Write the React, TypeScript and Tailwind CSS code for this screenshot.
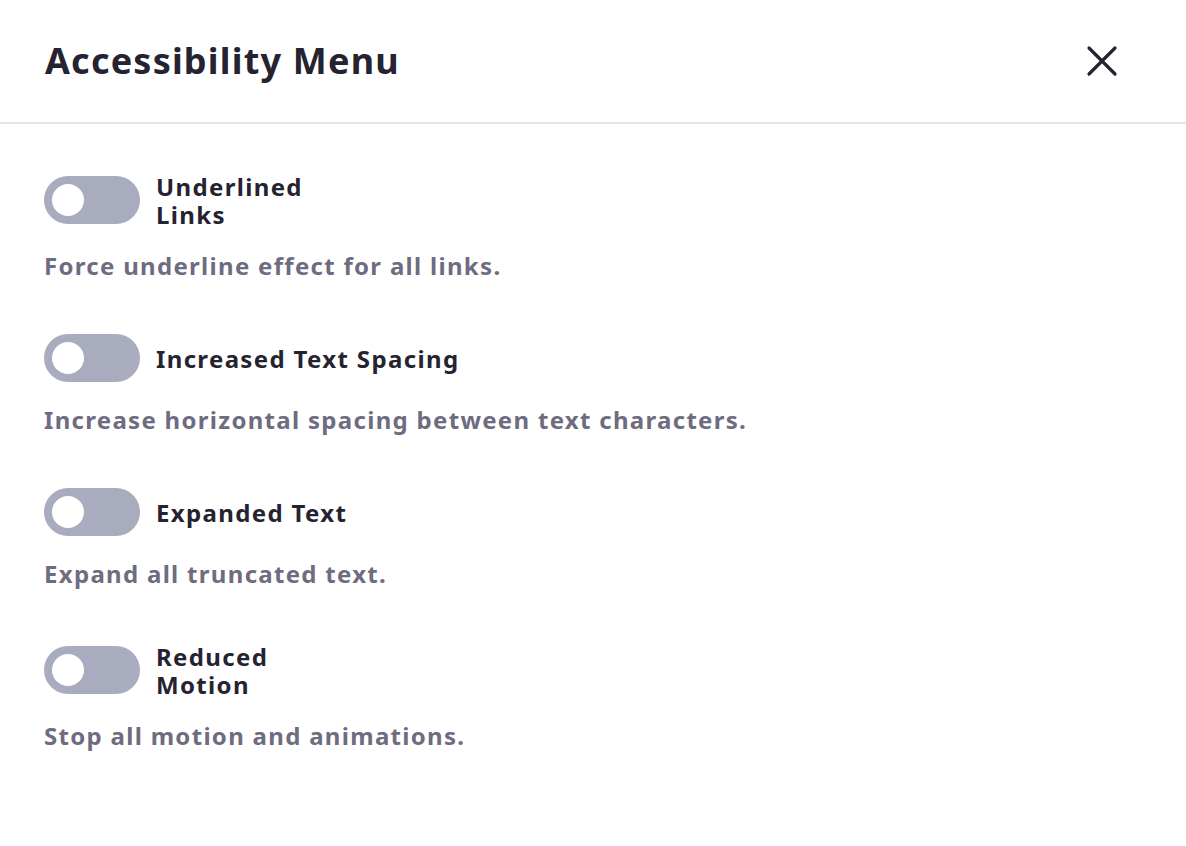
import React from "react";

const items = [
  { label: "Underlined Links", narrow: true, desc: "Force underline effect for all links." },
  { label: "Increased Text Spacing", narrow: false, desc: "Increase horizontal spacing between text characters." },
  { label: "Expanded Text", narrow: false, desc: "Expand all truncated text." },
  { label: "Reduced Motion", narrow: true, desc: "Stop all motion and animations." },
];

function Toggle() {
  return (
    <div className="w-[96px] h-[48px] rounded-full bg-[#a9abbe] flex items-center pl-[8px] shrink-0">
      <div className="w-[32px] h-[32px] rounded-full bg-white" />
    </div>
  );
}

export default function App() {
  return (
    <div className="w-[1186px] h-[846px] bg-white text-[#25232f]" style={{ fontFamily: '"Noto Sans", sans-serif' }}>
      <header className="h-[124px] border-b-2 border-[#e6e6ea] flex items-center justify-between pl-[45px] pr-[67px]">
        <h1 className="text-[36px] font-bold leading-none tracking-[1.2px]">Accessibility Menu</h1>
        <button className="w-[34px] h-[34px] flex items-center justify-center">
          <svg width="34" height="34" viewBox="0 0 34 34" fill="none" stroke="#25232f" strokeWidth="3.2" strokeLinecap="round">
            <path d="M4 4L30 30M30 4L4 30" />
          </svg>
        </button>
      </header>
      <div className="pt-[48px] px-[44px] flex flex-col gap-[50px]">
        {items.map((it, i) => (
          <div key={i} className="flex flex-col gap-[20px]">
            <div className="flex items-center gap-[16px]">
              <Toggle />
              <span
                className={
                  it.narrow
                    ? "block w-[170px] translate-y-[1px] text-[24px] font-bold leading-[28px] tracking-[1.35px]"
                    : "block translate-y-[1px] text-[24px] font-bold leading-[28px] tracking-[1.35px]"
                }
              >
                {it.label}
              </span>
            </div>
            <p className="text-[24px] font-bold leading-[36px] tracking-[1.3px] text-[#6d6c80] m-0">{it.desc}</p>
          </div>
        ))}
      </div>
    </div>
  );
}
